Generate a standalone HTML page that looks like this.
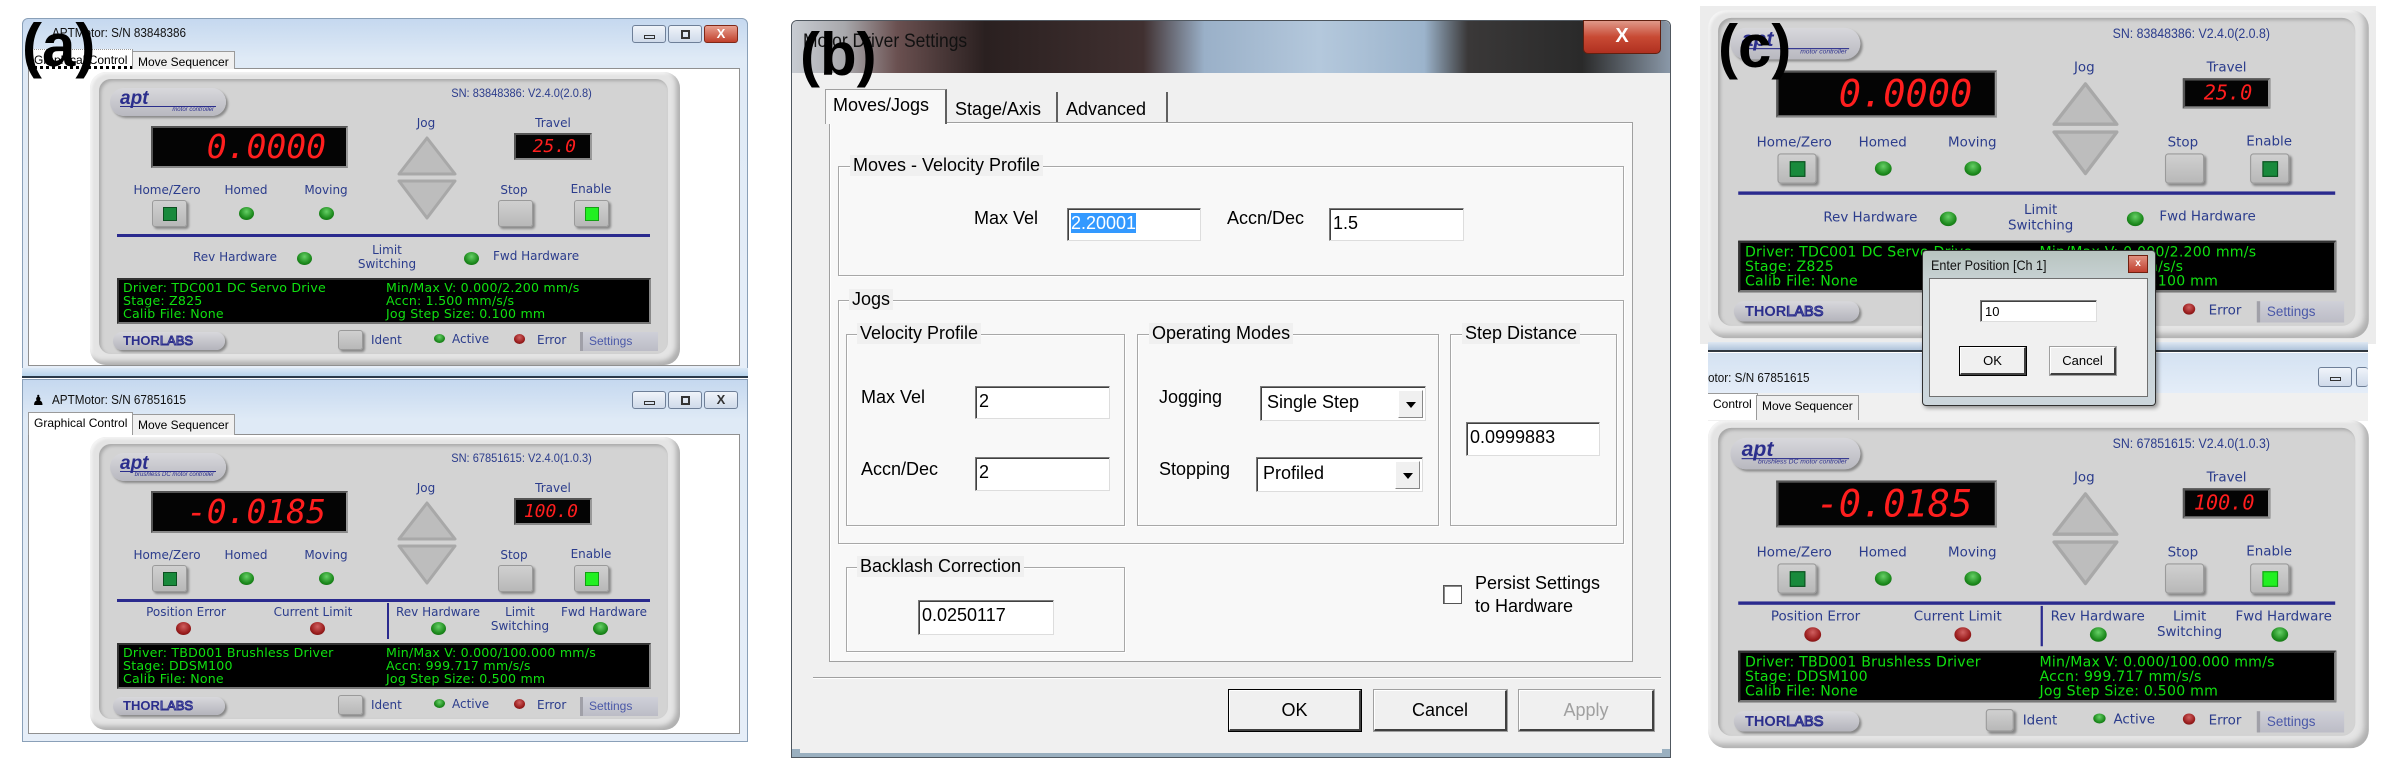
<!DOCTYPE html>
<html><head><meta charset="utf-8"><style>
*{box-sizing:border-box;margin:0;padding:0}
body{width:2400px;height:784px;background:#fff;position:relative;overflow:hidden;font-family:"Liberation Sans",sans-serif}
.a{position:absolute}
.panel{position:absolute;width:590px;height:293px;border-radius:16px;background:#e4e4e4;box-shadow:inset -4px -4px 5px #b0b0b0,inset 2px 2px 2px #f4f4f4;transform-origin:0 0}
.face{position:absolute;left:9px;top:7px;right:12px;bottom:11px;border-radius:12px;background:#d3d3d3;box-shadow:inset 2px 2px 3px #a8a8a8}
.lb{position:absolute;width:140px;text-align:center;font:12px "DejaVu Sans",sans-serif;color:#2b3c8c;white-space:nowrap;line-height:14px}
.ll{position:absolute;font:12px "DejaVu Sans",sans-serif;color:#2b3c8c;white-space:nowrap;line-height:14px}
.logo{position:absolute;left:20px;top:16px;width:116px;height:28px;border-radius:14px;background:linear-gradient(#d8d8dc,#b8b8c0);box-shadow:2px 2px 2px #8a8a8a}
.logo b{position:absolute;left:10px;top:0px;font:italic bold 19px "Liberation Sans",sans-serif;color:#2b2e8c}
.logo i{position:absolute;left:10px;right:10px;top:18px;border-top:1px solid #2b2e8c}
.logo s{position:absolute;right:12px;top:19px;font:italic 6px "Liberation Sans",sans-serif;color:#2b2e8c;text-decoration:none;white-space:nowrap}
.sn{position:absolute;right:88px;top:14px;font:12px "Liberation Sans",sans-serif;color:#2b3c8c;transform:scaleX(.92);transform-origin:100% 0;white-space:nowrap}
.disp{position:absolute;background:#040404;border:2px solid #555;border-right-color:#999;border-bottom-color:#888;color:#ff1e1e;font-family:"DejaVu Sans Mono",monospace;text-align:right;font-style:italic;white-space:nowrap}
.btn{position:absolute;width:35px;height:27px;background:linear-gradient(#d0d0d0,#b8b8b8);border:1px solid #9a9a9a;box-shadow:2px 2px 2px #888;border-radius:3px}
.btn i{position:absolute;left:10px;top:6px;width:14px;height:14px;background:#198a3c;border:1px solid #0c5020}
.btn i.on{background:#22f022;border-color:#14a014}
.led{position:absolute;width:15px;height:13px;border-radius:50%;background:radial-gradient(circle at 50% 35%,#66d066,#1d8a1d 60%,#0d5a0d);margin:-6px 0 0 -7px}
.red{background:radial-gradient(circle at 50% 35%,#d06060,#9a1d1d 60%,#5a0d0d)}
.line{position:absolute;left:27px;top:162px;width:533px;height:3px;background:#2a2a8e}
.info{position:absolute;left:27px;top:206px;width:534px;height:46px;background:#000;border:2px solid #333;border-right-color:#888;border-bottom-color:#777;color:#10e010;font:12.6px "DejaVu Sans",sans-serif;line-height:12.9px;padding-top:2px}
.info div{position:absolute;white-space:nowrap;letter-spacing:.2px}
.thor{position:absolute;left:23px;top:260px;width:112px;height:18px;border-radius:9px;background:linear-gradient(#d8d8dc,#b4b4bc);box-shadow:2px 2px 2px #888;font:bold 13px "Liberation Sans",sans-serif;color:#2b2e8c;padding-left:10px;line-height:18px}
.thor span{color:#d0d0e8;-webkit-text-stroke:1px #2b2e8c;font-weight:normal}
.set{position:absolute;left:490px;top:260px;width:78px;height:19px;background:linear-gradient(#cfd0d8,#bcbcc6);border-left:3px solid #a0a0a8;font:12px "Liberation Sans",sans-serif;color:#4a58a8;line-height:19px;padding-left:6px}
.win{position:absolute;background:linear-gradient(#c5d8ef,#dfeaf6 40px,#e6eef8);border:1px solid #8aa0b8;border-radius:6px 6px 0 0}
.wt{position:absolute;font:13px "Liberation Sans",sans-serif;color:#111;white-space:nowrap;transform:scaleX(.9);transform-origin:0 0}
.tb{position:absolute;width:34px;height:18px;border:1px solid #6e7f98;border-radius:3px;background:linear-gradient(#f0f4fa,#cfdaea)}
.tab{position:absolute;font:12px "Liberation Sans",sans-serif;border:1px solid #9a9a9a;border-bottom:none;background:#f0f0f0;padding:3px 5px;white-space:nowrap}
.lab{position:absolute;font:bold 60px "Liberation Sans",sans-serif;color:#000;line-height:1}
.dl{position:absolute;font:18px "Liberation Sans",sans-serif;color:#000;white-space:nowrap}
.gb{position:absolute;border:1px solid #a8a8a8;box-shadow:1px 1px 0 #fff,inset 1px 1px 0 #fff}
.leg{position:absolute;background:#f0f0f0;padding:0 3px;font:18px "Liberation Sans",sans-serif;white-space:nowrap}
.in{position:absolute;background:#fff;border:1px solid #7a7a7a;border-right-color:#ddd;border-bottom-color:#ddd;box-shadow:inset 1px 1px 0 #404040;font:18px "Liberation Sans",sans-serif;padding:4px 3px;white-space:nowrap}
.sel{position:absolute;background:#fff;border:1px solid #7a7a7a;border-right-color:#ddd;border-bottom-color:#ddd;box-shadow:inset 1px 1px 0 #404040;font:18px "Liberation Sans",sans-serif;padding:5px 6px;white-space:nowrap}
.sel i{position:absolute;right:2px;top:3px;width:25px;height:28px;background:#f0f0f0;border:1px solid #888;border-left-color:#fff;border-top-color:#fff}
.sel i:after{content:"";position:absolute;left:7px;top:11px;border:5px solid transparent;border-top:6px solid #000}
.pb{position:absolute;background:#f0f0f0;border:1px solid #fff;border-right:2px solid #404040;border-bottom:2px solid #404040;outline:1px solid #a0a0a0;font:18px "Liberation Sans",sans-serif;text-align:center}
</style></head><body>

<!-- ================= (a) top window ================= -->
<div class="win" style="left:22px;top:18px;width:726px;height:352px"></div>
<div class="wt" style="left:52px;top:25px">APTMotor: S/N 83848386</div>
<div class="tb" style="left:632px;top:25px"><div class="a" style="left:11px;top:9px;width:11px;height:4px;border:1px solid #333"></div></div>
<div class="tb" style="left:668px;top:25px"><div class="a" style="left:12px;top:4px;width:9px;height:9px;border:2px solid #333"></div></div>
<div class="tb" style="left:704px;top:25px;background:linear-gradient(#e8a090,#c0402c);border-color:#802818;color:#fff;font:bold 13px sans-serif;text-align:center;line-height:16px">X</div>
<div class="a" style="left:28px;top:68px;width:712px;height:298px;background:#fff;border:1px solid #909090"></div>
<div class="tab" style="left:28px;top:49px;height:20px;background:#fff;border-style:dotted">Graphical Control</div>
<div class="tab" style="left:132px;top:51px;height:18px">Move Sequencer</div>

<div class="panel" style="left:90px;top:72px">
 <div class="face"></div>
 <div class="logo"><b>apt</b><i></i><s>motor controller</s></div>
 <div class="sn">SN: 83848386: V2.4.0(2.0.8)</div>
 <div class="disp" style="left:61px;top:54px;width:197px;height:42px;font-size:33px;line-height:38px;padding-right:20px">0.0000</div>
 <div class="lb" style="left:266px;top:44px">Jog</div><div class="lb" style="left:393px;top:44px">Travel</div>
 <div class="disp" style="left:424px;top:61px;width:78px;height:27px;font-size:18px;line-height:23px;padding-right:14px">25.0</div>
 <svg class="a" style="left:305px;top:62px" width="66" height="90"><polygon points="4,40 32,4 60,40" fill="#bdbdbd" stroke="#a8a8a8" stroke-width="3" stroke-linejoin="round"/><polygon points="4,47 60,47 32,84" fill="#bdbdbd" stroke="#a8a8a8" stroke-width="3" stroke-linejoin="round"/></svg>
 <div class="lb" style="left:7px;top:111px">Home/Zero</div><div class="lb" style="left:86px;top:111px">Homed</div><div class="lb" style="left:166px;top:111px">Moving</div><div class="lb" style="left:354px;top:111px">Stop</div><div class="lb" style="left:431px;top:110px">Enable</div>
 <div class="btn" style="left:62px;top:128px"><i></i></div>
 <div class="led" style="left:156px;top:141px"></div><div class="led" style="left:236px;top:141px"></div>
 <div class="btn" style="left:408px;top:128px"></div>
 <div class="btn" style="left:484px;top:128px"><i class="on"></i></div>
 <div class="line"></div>
 <div class="lb" style="left:75px;top:178px">Rev Hardware</div><div class="led" style="left:214px;top:186px"></div>
 <div class="lb" style="left:227px;top:171px">Limit</div><div class="lb" style="left:227px;top:185px">Switching</div>
 <div class="led" style="left:381px;top:186px"></div><div class="ll" style="left:403px;top:177px">Fwd Hardware</div>
 <div class="info"><div style="left:4px;top:2px">Driver: TDC001 DC Servo Drive<br>Stage: Z825<br>Calib File: None</div><div style="left:267px;top:2px">Min/Max V: 0.000/2.200 mm/s<br>Accn: 1.500 mm/s/s<br>Jog Step Size: 0.100 mm</div></div>
 <div class="thor">THOR<span>LABS</span></div>
 <div class="btn" style="left:248px;top:258px;width:25px;height:20px"></div>
 <div class="ll" style="left:281px;top:261px">Ident</div>
 <div class="led" style="left:349px;top:267px;width:11px;height:9px;margin:-5px 0 0 -5px"></div><div class="ll" style="left:362px;top:260px">Active</div>
 <div class="led red" style="left:429px;top:267px;width:11px;height:10px;margin:-5px 0 0 -5px"></div><div class="ll" style="left:447px;top:261px">Error</div>
 <div class="set">Settings</div>
</div>

<!-- ================= (a) bottom window ================= -->
<div class="a" style="left:22px;top:368px;width:726px;height:10px;background:linear-gradient(#dbe8f6,#b8d4ec);border-bottom:2px solid #2a3a4a"></div>
<div class="win" style="left:22px;top:379px;width:726px;height:363px;border-radius:0"></div>
<div class="a" style="left:32px;top:392px;font:14px sans-serif">&#9823;</div>
<div class="wt" style="left:52px;top:392px">APTMotor: S/N 67851615</div>
<div class="tb" style="left:632px;top:391px"><div class="a" style="left:11px;top:9px;width:11px;height:4px;border:1px solid #333"></div></div>
<div class="tb" style="left:668px;top:391px"><div class="a" style="left:12px;top:4px;width:9px;height:9px;border:2px solid #333"></div></div>
<div class="tb" style="left:704px;top:391px;color:#333;font:bold 13px sans-serif;text-align:center;line-height:16px">X</div>
<div class="a" style="left:28px;top:434px;width:712px;height:300px;background:#fff;border:1px solid #909090"></div>
<div class="tab" style="left:28px;top:412px;height:23px;background:#fff">Graphical Control</div>
<div class="tab" style="left:132px;top:414px;height:21px">Move Sequencer</div>

<div class="panel" style="left:90px;top:437px">
 <div class="face"></div>
 <div class="logo"><b>apt</b><i></i><s>brushless DC motor controller</s></div>
 <div class="sn">SN: 67851615: V2.4.0(1.0.3)</div>
 <div class="disp" style="left:61px;top:54px;width:197px;height:42px;font-size:33px;line-height:38px;padding-right:20px">-0.0185</div>
 <div class="lb" style="left:266px;top:44px">Jog</div><div class="lb" style="left:393px;top:44px">Travel</div>
 <div class="disp" style="left:424px;top:61px;width:78px;height:27px;font-size:18px;line-height:23px;padding-right:12px">100.0</div>
 <svg class="a" style="left:305px;top:62px" width="66" height="90"><polygon points="4,40 32,4 60,40" fill="#bdbdbd" stroke="#a8a8a8" stroke-width="3" stroke-linejoin="round"/><polygon points="4,47 60,47 32,84" fill="#bdbdbd" stroke="#a8a8a8" stroke-width="3" stroke-linejoin="round"/></svg>
 <div class="lb" style="left:7px;top:111px">Home/Zero</div><div class="lb" style="left:86px;top:111px">Homed</div><div class="lb" style="left:166px;top:111px">Moving</div><div class="lb" style="left:354px;top:111px">Stop</div><div class="lb" style="left:431px;top:110px">Enable</div>
 <div class="btn" style="left:62px;top:128px"><i></i></div>
 <div class="led" style="left:156px;top:141px"></div><div class="led" style="left:236px;top:141px"></div>
 <div class="btn" style="left:408px;top:128px"></div>
 <div class="btn" style="left:484px;top:128px"><i class="on"></i></div>
 <div class="line"></div>
 <div class="lb" style="left:26px;top:168px">Position Error</div><div class="led red" style="left:93px;top:191px"></div>
 <div class="lb" style="left:153px;top:168px">Current Limit</div><div class="led red" style="left:227px;top:191px"></div>
 <div class="a" style="left:297px;top:166px;width:2px;height:36px;background:#2a2a8e"></div>
 <div class="lb" style="left:278px;top:168px">Rev Hardware</div><div class="led" style="left:348px;top:191px"></div>
 <div class="lb" style="left:360px;top:168px">Limit</div><div class="lb" style="left:360px;top:182px">Switching</div>
 <div class="lb" style="left:444px;top:168px">Fwd Hardware</div><div class="led" style="left:510px;top:191px"></div>
 <div class="info"><div style="left:4px;top:2px">Driver: TBD001 Brushless Driver<br>Stage: DDSM100<br>Calib File: None</div><div style="left:267px;top:2px">Min/Max V: 0.000/100.000 mm/s<br>Accn: 999.717 mm/s/s<br>Jog Step Size: 0.500 mm</div></div>
 <div class="thor">THOR<span>LABS</span></div>
 <div class="btn" style="left:248px;top:258px;width:25px;height:20px"></div>
 <div class="ll" style="left:281px;top:261px">Ident</div>
 <div class="led" style="left:349px;top:267px;width:11px;height:9px;margin:-5px 0 0 -5px"></div><div class="ll" style="left:362px;top:260px">Active</div>
 <div class="led red" style="left:429px;top:267px;width:11px;height:10px;margin:-5px 0 0 -5px"></div><div class="ll" style="left:447px;top:261px">Error</div>
 <div class="set">Settings</div>
</div>
<div class="lab" style="left:22px;top:16px">(a)</div>

<!-- ================= (b) dialog ================= -->
<div class="a" style="left:791px;top:20px;width:880px;height:738px;background:#f0f0f0;border:1px solid #505860;border-radius:6px 6px 0 0;box-shadow:inset 0 -8px 0 #9ab0c0"></div>
<div class="a" style="left:792px;top:21px;width:878px;height:52px;border-radius:6px 6px 0 0;background:linear-gradient(90deg,#c8ccd2 0,#a8a8ac 6%,#6a5050 12%,#2a2020 22%,#403030 40%,#9ab0c8 47%,#b4c8dc 60%,#9cb4cc 72%,#3a3838 77%,#2a2a2a 90%,#8a98a8 100%)"></div>
<div class="a" style="left:803px;top:31px;font:19px 'Liberation Sans',sans-serif;color:#111;transform:scaleX(.92);transform-origin:0 0">Motor Driver Settings</div>
<div class="a" style="left:1583px;top:20px;width:78px;height:34px;border-radius:0 0 5px 5px;background:linear-gradient(#e09a8a,#c84a34 50%,#b03020);border:1px solid #602010;color:#fff;font:bold 20px sans-serif;text-align:center;line-height:30px">X</div>
<div class="a" style="left:800px;top:73px;width:862px;height:680px;background:#f0f0f0"></div>
<div class="a" style="left:829px;top:122px;width:804px;height:540px;border:1px solid #a0a0a0;background:#f8f8f8;box-shadow:inset 1px 1px 0 #fff"></div>
<div class="a" style="left:825px;top:89px;width:122px;height:35px;background:#f8f8f8;border:1px solid #a0a0a0;border-bottom:none;border-right:2px solid #606060"></div>
<div class="dl" style="left:833px;top:95px">Moves/Jogs</div>
<div class="a" style="left:947px;top:92px;width:111px;height:30px;border-right:2px solid #606060"></div>
<div class="dl" style="left:955px;top:99px">Stage/Axis</div>
<div class="a" style="left:1058px;top:92px;width:110px;height:30px;border-right:2px solid #606060"></div>
<div class="dl" style="left:1066px;top:99px">Advanced</div>

<div class="gb" style="left:838px;top:166px;width:786px;height:110px"></div>
<div class="leg" style="left:850px;top:155px">Moves - Velocity Profile</div>
<div class="dl" style="left:974px;top:208px">Max Vel</div>
<div class="in" style="left:1067px;top:208px;width:134px;height:33px"><span style="background:#3399ff;color:#fff">2.20001</span></div>
<div class="dl" style="left:1227px;top:208px">Accn/Dec</div>
<div class="in" style="left:1329px;top:208px;width:135px;height:33px">1.5</div>

<div class="gb" style="left:838px;top:300px;width:786px;height:244px"></div>
<div class="leg" style="left:849px;top:289px">Jogs</div>
<div class="gb" style="left:846px;top:334px;width:279px;height:192px"></div>
<div class="leg" style="left:857px;top:323px">Velocity Profile</div>
<div class="dl" style="left:861px;top:387px">Max Vel</div>
<div class="in" style="left:975px;top:386px;width:135px;height:33px">2</div>
<div class="dl" style="left:861px;top:459px">Accn/Dec</div>
<div class="in" style="left:975px;top:457px;width:135px;height:34px">2</div>
<div class="gb" style="left:1137px;top:334px;width:302px;height:192px"></div>
<div class="leg" style="left:1149px;top:323px">Operating Modes</div>
<div class="dl" style="left:1159px;top:387px">Jogging</div>
<div class="sel" style="left:1260px;top:386px;width:166px;height:35px">Single Step<i></i></div>
<div class="dl" style="left:1159px;top:459px">Stopping</div>
<div class="sel" style="left:1256px;top:457px;width:167px;height:35px">Profiled<i></i></div>
<div class="gb" style="left:1450px;top:334px;width:167px;height:192px"></div>
<div class="leg" style="left:1462px;top:323px">Step Distance</div>
<div class="in" style="left:1466px;top:422px;width:134px;height:34px">0.0999883</div>

<div class="gb" style="left:846px;top:567px;width:279px;height:85px"></div>
<div class="leg" style="left:857px;top:556px">Backlash Correction</div>
<div class="in" style="left:918px;top:600px;width:136px;height:35px">0.0250117</div>
<div class="a" style="left:1443px;top:585px;width:19px;height:19px;background:#fff;border:1px solid #555;box-shadow:inset 1px 1px 0 #888"></div>
<div class="dl" style="left:1475px;top:572px;line-height:23px">Persist Settings<br>to Hardware</div>
<div class="a" style="left:813px;top:677px;width:848px;height:2px;border-top:1px solid #a0a0a0;border-bottom:1px solid #fff"></div>
<div class="pb" style="left:1229px;top:690px;width:132px;height:41px;line-height:38px;outline:1px solid #000">OK</div>
<div class="pb" style="left:1374px;top:690px;width:133px;height:41px;line-height:38px">Cancel</div>
<div class="pb" style="left:1519px;top:690px;width:135px;height:41px;line-height:38px;color:#a0a0a0">Apply</div>
<div class="lab" style="left:800px;top:25px">(b)</div>

<!-- ================= (c) ================= -->
<div class="a" style="left:1700px;top:6px;width:676px;height:338px;background:#ececec"></div>
<div class="panel" style="left:1708px;top:10px;transform:scale(1.12)">
 <div class="face"></div>
 <div class="logo"><b>apt</b><i></i><s>motor controller</s></div>
 <div class="sn">SN: 83848386: V2.4.0(2.0.8)</div>
 <div class="disp" style="left:61px;top:54px;width:197px;height:42px;font-size:33px;line-height:38px;padding-right:20px">0.0000</div>
 <div class="lb" style="left:266px;top:44px">Jog</div><div class="lb" style="left:393px;top:44px">Travel</div>
 <div class="disp" style="left:424px;top:61px;width:78px;height:27px;font-size:18px;line-height:23px;padding-right:14px">25.0</div>
 <svg class="a" style="left:305px;top:62px" width="66" height="90"><polygon points="4,40 32,4 60,40" fill="#bdbdbd" stroke="#a8a8a8" stroke-width="3" stroke-linejoin="round"/><polygon points="4,47 60,47 32,84" fill="#bdbdbd" stroke="#a8a8a8" stroke-width="3" stroke-linejoin="round"/></svg>
 <div class="lb" style="left:7px;top:111px">Home/Zero</div><div class="lb" style="left:86px;top:111px">Homed</div><div class="lb" style="left:166px;top:111px">Moving</div><div class="lb" style="left:354px;top:111px">Stop</div><div class="lb" style="left:431px;top:110px">Enable</div>
 <div class="btn" style="left:62px;top:128px"><i></i></div>
 <div class="led" style="left:156px;top:141px"></div><div class="led" style="left:236px;top:141px"></div>
 <div class="btn" style="left:408px;top:128px"></div>
 <div class="btn" style="left:484px;top:128px"><i></i></div>
 <div class="line"></div>
 <div class="lb" style="left:75px;top:178px">Rev Hardware</div><div class="led" style="left:214px;top:186px"></div>
 <div class="lb" style="left:227px;top:171px">Limit</div><div class="lb" style="left:227px;top:185px">Switching</div>
 <div class="led" style="left:381px;top:186px"></div><div class="ll" style="left:403px;top:177px">Fwd Hardware</div>
 <div class="info"><div style="left:4px;top:2px">Driver: TDC001 DC Servo Drive<br>Stage: Z825<br>Calib File: None</div><div style="left:267px;top:2px">Min/Max V: 0.000/2.200 mm/s<br>Accn: 1.500 mm/s/s<br>Jog Step Size: 0.100 mm</div></div>
 <div class="thor">THOR<span>LABS</span></div>
 <div class="led red" style="left:429px;top:267px;width:11px;height:10px;margin:-5px 0 0 -5px"></div><div class="ll" style="left:447px;top:261px">Error</div>
 <div class="set">Settings</div>
</div>
<div class="a" style="left:1708px;top:342px;width:660px;height:10px;background:linear-gradient(#dfe8f2,#b0c4da);border-bottom:2px solid #303840"></div>
<div class="a" style="left:1708px;top:353px;width:660px;height:40px;background:linear-gradient(#d4e2f2,#e4edf8)"></div>
<div class="wt" style="left:1708px;top:370px">otor: S/N 67851615</div>
<div class="tb" style="left:2318px;top:367px;height:20px"><div class="a" style="left:11px;top:9px;width:11px;height:4px;border:1px solid #333"></div></div>
<div class="tb" style="left:2356px;top:367px;width:12px;height:20px;border-right:none"></div>
<div class="a" style="left:1708px;top:393px;width:660px;height:28px;background:#f0f0f0"></div>
<div class="tab" style="left:1708px;top:393px;height:27px;background:#fff;border-left:none">Control</div>
<div class="tab" style="left:1756px;top:395px;height:25px">Move Sequencer</div>

<div class="panel" style="left:1708px;top:420px;transform:scale(1.12)">
 <div class="face"></div>
 <div class="logo"><b>apt</b><i></i><s>brushless DC motor controller</s></div>
 <div class="sn">SN: 67851615: V2.4.0(1.0.3)</div>
 <div class="disp" style="left:61px;top:54px;width:197px;height:42px;font-size:33px;line-height:38px;padding-right:20px">-0.0185</div>
 <div class="lb" style="left:266px;top:44px">Jog</div><div class="lb" style="left:393px;top:44px">Travel</div>
 <div class="disp" style="left:424px;top:61px;width:78px;height:27px;font-size:18px;line-height:23px;padding-right:12px">100.0</div>
 <svg class="a" style="left:305px;top:62px" width="66" height="90"><polygon points="4,40 32,4 60,40" fill="#bdbdbd" stroke="#a8a8a8" stroke-width="3" stroke-linejoin="round"/><polygon points="4,47 60,47 32,84" fill="#bdbdbd" stroke="#a8a8a8" stroke-width="3" stroke-linejoin="round"/></svg>
 <div class="lb" style="left:7px;top:111px">Home/Zero</div><div class="lb" style="left:86px;top:111px">Homed</div><div class="lb" style="left:166px;top:111px">Moving</div><div class="lb" style="left:354px;top:111px">Stop</div><div class="lb" style="left:431px;top:110px">Enable</div>
 <div class="btn" style="left:62px;top:128px"><i></i></div>
 <div class="led" style="left:156px;top:141px"></div><div class="led" style="left:236px;top:141px"></div>
 <div class="btn" style="left:408px;top:128px"></div>
 <div class="btn" style="left:484px;top:128px"><i class="on"></i></div>
 <div class="line"></div>
 <div class="lb" style="left:26px;top:168px">Position Error</div><div class="led red" style="left:93px;top:191px"></div>
 <div class="lb" style="left:153px;top:168px">Current Limit</div><div class="led red" style="left:227px;top:191px"></div>
 <div class="a" style="left:297px;top:166px;width:2px;height:36px;background:#2a2a8e"></div>
 <div class="lb" style="left:278px;top:168px">Rev Hardware</div><div class="led" style="left:348px;top:191px"></div>
 <div class="lb" style="left:360px;top:168px">Limit</div><div class="lb" style="left:360px;top:182px">Switching</div>
 <div class="lb" style="left:444px;top:168px">Fwd Hardware</div><div class="led" style="left:510px;top:191px"></div>
 <div class="info"><div style="left:4px;top:2px">Driver: TBD001 Brushless Driver<br>Stage: DDSM100<br>Calib File: None</div><div style="left:267px;top:2px">Min/Max V: 0.000/100.000 mm/s<br>Accn: 999.717 mm/s/s<br>Jog Step Size: 0.500 mm</div></div>
 <div class="thor">THOR<span>LABS</span></div>
 <div class="btn" style="left:248px;top:258px;width:25px;height:20px"></div>
 <div class="ll" style="left:281px;top:261px">Ident</div>
 <div class="led" style="left:349px;top:267px;width:11px;height:9px;margin:-5px 0 0 -5px"></div><div class="ll" style="left:362px;top:260px">Active</div>
 <div class="led red" style="left:429px;top:267px;width:11px;height:10px;margin:-5px 0 0 -5px"></div><div class="ll" style="left:447px;top:261px">Error</div>
 <div class="set">Settings</div>
</div>

<!-- Enter Position dialog -->
<div class="a" style="left:1922px;top:250px;width:234px;height:156px;background:linear-gradient(#b8c4c0,#c8d2d4 30px,#ccd6dc);border:1px solid #303030;border-radius:4px;box-shadow:2px 2px 4px rgba(0,0,0,.4)"></div>
<div class="a" style="left:1931px;top:257px;font:14px 'Liberation Sans',sans-serif;color:#111;transform:scaleX(.9);transform-origin:0 0;white-space:nowrap">Enter Position [Ch 1]</div>
<div class="a" style="left:2128px;top:255px;width:20px;height:18px;background:linear-gradient(#e09080,#c04030);border:1px solid #702010;color:#fff;font:bold 10px sans-serif;text-align:center;line-height:16px">x</div>
<div class="a" style="left:1929px;top:278px;width:219px;height:119px;background:#f0f0f0;border:1px solid #707070"></div>
<div class="in" style="left:1980px;top:300px;width:117px;height:22px;font-size:13px;padding:3px 4px">10</div>
<div class="pb" style="left:1960px;top:347px;width:66px;height:28px;line-height:25px;font-size:13px;outline:1px solid #000">OK</div>
<div class="pb" style="left:2050px;top:347px;width:66px;height:28px;line-height:25px;font-size:13px">Cancel</div>

<div class="lab" style="left:1718px;top:17px">(c)</div>
</body></html>
